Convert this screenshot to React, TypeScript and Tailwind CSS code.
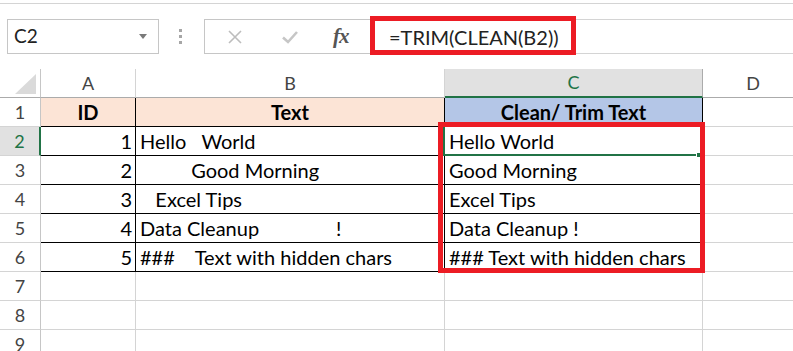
import React from "react";

type DataRow = { n: number; a: string; b: string; c: string };

const DATA: DataRow[] = [
  { n: 2, a: "1", b: "Hello   World", c: "Hello World" },
  { n: 3, a: "2", b: "          Good Morning", c: "Good Morning" },
  { n: 4, a: "3", b: "   Excel Tips", c: "Excel Tips" },
  { n: 5, a: "4", b: "Data Cleanup               !", c: "Data Cleanup !" },
  { n: 6, a: "5", b: "###    Text with hidden chars", c: "### Text with hidden chars" },
];

const EMPTY_ROWS = [7, 8, 9];

const RowHeader: React.FC<{ n: number; active?: boolean }> = ({ n, active }) =>
  active ? (
    <div className="w-[41px] shrink-0 h-full flex items-center justify-center bg-[#e1e1e1] border-r-2 border-r-[#217346] border-b border-b-[#d4d4d4] text-[#217346] text-[18px]">
      {n}
    </div>
  ) : (
    <div className="w-[41px] shrink-0 h-full flex items-center justify-center border-r border-r-[#c6c6c6] border-b border-b-[#d4d4d4] text-[#444] text-[18px]">
      {n}
    </div>
  );

export default function App() {
  return (
    <div className="relative w-[793px] h-[351px] overflow-hidden bg-white font-['Lato',sans-serif] text-black">
      {/* top edge of ribbon */}
      <div className="h-[4px] border-b border-[#d4d4d4]" />

      {/* formula bar */}
      <div className="mt-[15px] flex h-[35px]">
        <div className="ml-[7px] w-[152px] shrink-0 flex items-center justify-between border border-[#c6c6c6] pl-[6px] pr-[11px]">
          <span className="text-[19px] text-[#222]">C2</span>
          <svg width="8" height="5" viewBox="0 0 8 5">
            <path d="M0 0 H8 L4 5 Z" fill="#7a7a7a" />
          </svg>
        </div>
        <div className="w-[45px] shrink-0 flex flex-col items-center justify-center gap-[3px] pr-[2px]">
          <div className="w-[3px] h-[3px] bg-[#a6a6a6]" />
          <div className="w-[3px] h-[3px] bg-[#a6a6a6]" />
          <div className="w-[3px] h-[3px] bg-[#a6a6a6]" />
        </div>
        <div className="w-[167px] shrink-0 flex items-center border border-[#c6c6c6] pl-[22px]">
          <svg width="16" height="16" viewBox="0 0 16 16">
            <path d="M2 2 L14 14 M14 2 L2 14" stroke="#bdbdbd" strokeWidth="1.6" />
          </svg>
          <svg className="ml-[38px]" width="18" height="16" viewBox="0 0 18 16">
            <path d="M2 8.5 L7 13 L16 3" stroke="#c6c6c6" strokeWidth="2.6" fill="none" />
          </svg>
          <span className="ml-[34px] font-['Liberation_Serif',serif] italic font-bold text-[21px] text-[#555] leading-none tracking-[-1px]">
            fx
          </span>
        </div>
        <div className="flex-1 flex items-center border-y border-[#d4d4d4] pl-[18px]">
          <span className="text-[20px] text-[#222] [word-spacing:1px]">=TRIM(CLEAN(B2))</span>
        </div>
      </div>

      {/* sheet */}
      <div className="mt-[15px] flex flex-col text-[20px]">
        {/* column headers */}
        <div className="flex h-[29px]">
          <div className="w-[41px] shrink-0 h-full relative border-r border-r-[#c6c6c6] border-b border-b-[#ababab]">
            <svg className="absolute left-[15px] top-[5px]" width="21" height="20" viewBox="0 0 21 20">
              <path d="M21 0 V20 H0 Z" fill="#dadada" />
            </svg>
          </div>
          <div className="w-[95px] shrink-0 flex items-center justify-center border-r border-r-[#d4d4d4] border-b border-b-[#ababab] text-[18px] text-[#444]">A</div>
          <div className="w-[309px] shrink-0 flex items-center justify-center border-r border-r-[#d4d4d4] border-b border-b-[#ababab] text-[18px] text-[#444]">B</div>
          <div className="w-[258px] shrink-0 flex items-center justify-center bg-[#e1e1e1] border-r border-r-[#ababab] border-b-2 border-b-[#217346] text-[18px] text-[#217346]">C</div>
          <div className="w-[100px] shrink-0 flex items-center justify-center border-b border-b-[#ababab] text-[18px] text-[#444]">D</div>
        </div>

        {/* row 1: table header */}
        <div className="flex h-[29px]">
          <RowHeader n={1} />
          <div className="w-[95px] shrink-0 flex items-center justify-center bg-[#fce4d6] border-r border-b border-black font-bold">ID</div>
          <div className="w-[309px] shrink-0 flex items-center justify-center bg-[#fce4d6] border-r border-b border-black font-bold">Text</div>
          <div className="w-[258px] shrink-0 flex items-center justify-center bg-[#b4c6e7] border-r border-b border-black font-bold">Clean/ Trim Text</div>
          <div className="w-[100px] shrink-0 border-b border-[#d4d4d4]" />
        </div>

        {DATA.map((r) => (
          <div key={r.n} className="flex h-[29px]">
            <RowHeader n={r.n} active={r.n === 2} />
            <div className="w-[95px] shrink-0 flex items-center justify-end pr-[3px] border-r border-b border-black">{r.a}</div>
            <div className="w-[309px] shrink-0 flex items-center pl-[4px] border-r border-b border-black whitespace-pre">{r.b}</div>
            <div className="w-[258px] shrink-0 flex items-center pl-[4px] border-r border-b border-black whitespace-pre">{r.c}</div>
            <div className="w-[100px] shrink-0 border-b border-[#d4d4d4]" />
          </div>
        ))}

        {EMPTY_ROWS.map((n) => (
          <div key={n} className="flex h-[29px]">
            <RowHeader n={n} />
            <div className="w-[95px] shrink-0 border-r border-b border-[#d4d4d4]" />
            <div className="w-[309px] shrink-0 border-r border-b border-[#d4d4d4]" />
            <div className="w-[258px] shrink-0 border-r border-b border-[#d4d4d4]" />
            <div className="w-[100px] shrink-0 border-b border-[#d4d4d4]" />
          </div>
        ))}
      </div>

      {/* active cell C2 */}
      <div className="absolute left-[443px] top-[124px] w-[260px] h-[32px] border-2 border-[#217346]" />
      <div className="absolute left-[696px] top-[152px] w-[6px] h-[6px] bg-[#217346] border border-white" />

      {/* annotation boxes */}
      <div className="absolute left-[370px] top-[16px] w-[206px] h-[39px] border-[5px] border-[#ec1c24]" />
      <div className="absolute left-[438px] top-[122px] w-[267px] h-[151px] border-[5px] border-[#ec1c24]" />
    </div>
  );
}
